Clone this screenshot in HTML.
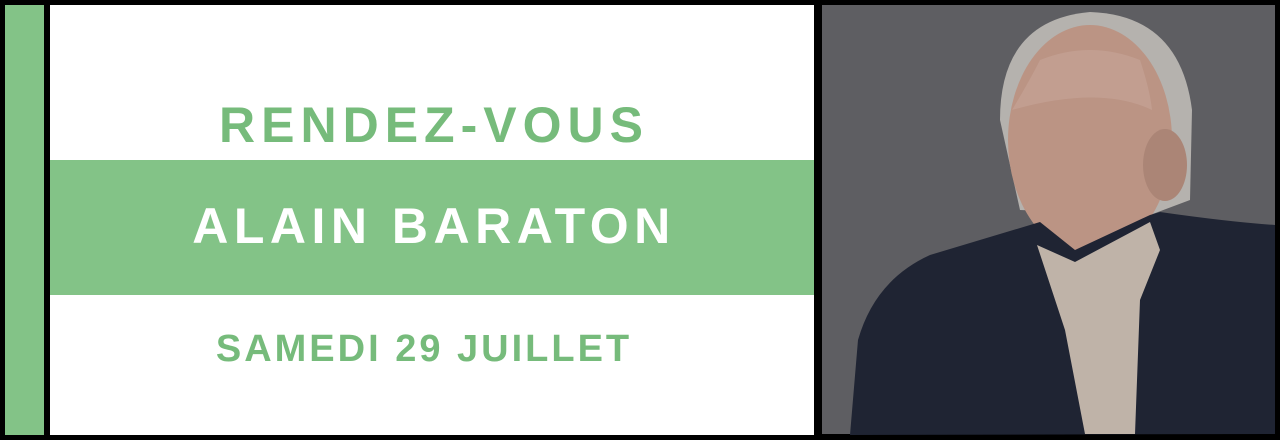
<!DOCTYPE html>
<html><head><meta charset="utf-8"><style>
html,body{margin:0;padding:0;background:#000;width:1280px;height:440px;overflow:hidden;font-family:"Liberation Sans",sans-serif}
.a{position:absolute}
.t{position:absolute;left:50px;width:764px;text-align:center;font-weight:bold}
</style></head><body>
<div class="a" style="left:5px;top:5px;width:39px;height:430px;background:#83c387"></div>
<div class="a" style="left:50px;top:5px;width:764px;height:430px;background:#fff"></div>
<div class="a" style="left:50px;top:160px;width:764px;height:135px;background:#83c387"></div>
<div class="t" style="top:96px;font-size:50px;color:#76bb7b;letter-spacing:6px;left:52px">RENDEZ-VOUS</div>
<div class="t" style="top:197px;font-size:50px;color:#fff;letter-spacing:5.5px;left:52px">ALAIN BARATON</div>
<div class="t" style="top:328px;font-size:38px;color:#76bb7b;left:42px;letter-spacing:3px">SAMEDI 29 JUILLET</div>
<svg class="a" style="left:0;top:0" width="1280" height="440" viewBox="0 0 1280 440">
<rect x="822" y="5" width="453" height="429" fill="#5e5e62"/>
<path d="M1000,120 Q1000,20 1090,12 Q1180,15 1192,110 L1190,200 L1150,215 L1020,210 Z" fill="#b5b2ae"/>
<ellipse cx="1090" cy="140" rx="82" ry="115" fill="#bb9484"/>
<ellipse cx="1165" cy="165" rx="22" ry="36" fill="#ab8576"/>
<path d="M1012,110 Q1030,80 1040,60 Q1090,40 1140,60 Q1150,90 1152,110 Q1100,85 1012,110Z" fill="#c29e90"/>
<path d="M850,435 L858,340 Q875,280 930,255 L1040,222 L1075,250 L1150,215 L1160,212 Q1230,222 1275,225 L1275,434 Z" fill="#1f2433"/>
<path d="M1037,245 L1075,262 L1150,222 L1160,250 L1140,300 L1135,434 L1085,434 L1065,330 Z" fill="#bfb3a8"/>
</svg>
</body></html>
